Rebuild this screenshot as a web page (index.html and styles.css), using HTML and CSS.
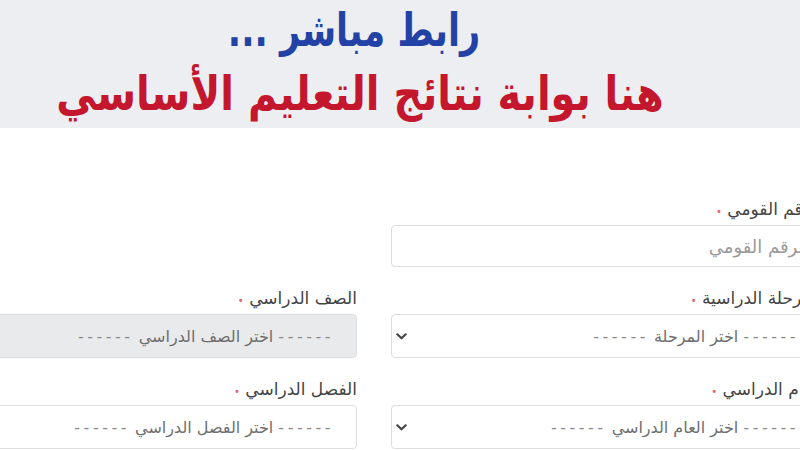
FILE: index.html
```html
<!DOCTYPE html>
<html lang="ar" dir="rtl">
<head>
<meta charset="utf-8">
<title>نتائج التعليم الأساسي</title>
<link rel="stylesheet" href="styles.css">
</head>
<body>
<header class="banner">
  <div class="line-blue">رابط مباشر ...</div>
  <div class="line-red">هنا بوابة نتائج التعليم الأساسي</div>
</header>
<main class="page">
  <form class="form">
    <div class="field">
      <label class="label">الرقم القومي <span class="req">•</span></label>
      <div class="input"><span class="placeholder">الرقم القومي</span></div>
    </div>
    <div class="field empty"></div>

    <div class="field">
      <label class="label">المرحلة الدراسية <span class="req">•</span></label>
      <div class="select">
        <span class="option"><span class="dash">------</span> اختر المرحلة <span class="dash">------</span></span>
        <svg class="chev" width="11" height="7" viewBox="0 0 11 7"><path d="M1.3 1.3 L5.5 5.3 L9.7 1.3" fill="none" stroke="#454545" stroke-width="2.2" stroke-linecap="round" stroke-linejoin="round"/></svg>
      </div>
    </div>
    <div class="field">
      <label class="label">الصف الدراسي <span class="req">•</span></label>
      <div class="select disabled">
        <span class="option"><span class="dash">------</span> اختر الصف الدراسي <span class="dash">------</span></span>
        <svg class="chev" width="11" height="7" viewBox="0 0 11 7"><path d="M1.3 1.3 L5.5 5.3 L9.7 1.3" fill="none" stroke="#454545" stroke-width="2.2" stroke-linecap="round" stroke-linejoin="round"/></svg>
      </div>
    </div>

    <div class="field">
      <label class="label">العام الدراسي <span class="req">•</span></label>
      <div class="select">
        <span class="option"><span class="dash">------</span> اختر العام الدراسي <span class="dash">------</span></span>
        <svg class="chev" width="11" height="7" viewBox="0 0 11 7"><path d="M1.3 1.3 L5.5 5.3 L9.7 1.3" fill="none" stroke="#454545" stroke-width="2.2" stroke-linecap="round" stroke-linejoin="round"/></svg>
      </div>
    </div>
    <div class="field">
      <label class="label">الفصل الدراسي <span class="req">•</span></label>
      <div class="select">
        <span class="option"><span class="dash">------</span> اختر الفصل الدراسي <span class="dash">------</span></span>
        <svg class="chev" width="11" height="7" viewBox="0 0 11 7"><path d="M1.3 1.3 L5.5 5.3 L9.7 1.3" fill="none" stroke="#454545" stroke-width="2.2" stroke-linecap="round" stroke-linejoin="round"/></svg>
      </div>
    </div>
  </form>
</main>
</body>
</html>
```

FILE: styles.css
```css
html, body {
  margin: 0;
  padding: 0;
  width: 800px;
  height: 450px;
  overflow: hidden;
  background: #ffffff;
  font-family: "DejaVu Sans", sans-serif;
}

.banner {
  height: 128px;
  background: #eceef2;
  display: flex;
  flex-direction: column;
  align-items: center;
  box-sizing: border-box;
  padding-top: 4px;
}

.line-blue {
  font-weight: bold;
  font-size: 35px;
  line-height: 52px;
  color: #2342a6;
  margin-right: 92px;
  transform: scaleY(1.3);
}

.line-red {
  font-weight: bold;
  font-size: 40px;
  line-height: 66px;
  color: #c4162c;
  margin-right: 80px;
  margin-top: 4px;
  transform: scaleY(1.2);
}

.page {
  direction: ltr;
  width: 800px;
  overflow: hidden;
}

.form {
  direction: rtl;
  width: 896px;
  margin-left: -74px;
  padding-top: 70px;
  display: grid;
  grid-template-columns: 431px 431px;
  column-gap: 34px;
  row-gap: 20px;
}

.field {
  display: flex;
  flex-direction: column;
}

.label {
  font-size: 17px;
  line-height: 22px;
  color: #444444;
  margin-bottom: 2px;
}

.req {
  color: #e4606a;
  font-size: 10px;
}

.input, .select {
  height: 42px;
  box-sizing: border-box;
  border: 1px solid #dcdde0;
  border-radius: 4px;
  background: #ffffff;
  display: flex;
  align-items: center;
  padding: 0 22px 0 4px;
  font-size: 16px;
}

.input {
  padding-right: 12px;
}

.select {
  height: 44px;
}

.placeholder {
  color: #9a9a9a;
  font-size: 18px;
}

.option {
  color: #6e6e6e;
  flex: 1;
}

.dash {
  display: inline-block;
  direction: ltr;
  letter-spacing: 3.5px;
  color: #8a8a8a;
}

.chev {
  flex: none;
}

.select.disabled {
  background: #e9eaec;
}
```
